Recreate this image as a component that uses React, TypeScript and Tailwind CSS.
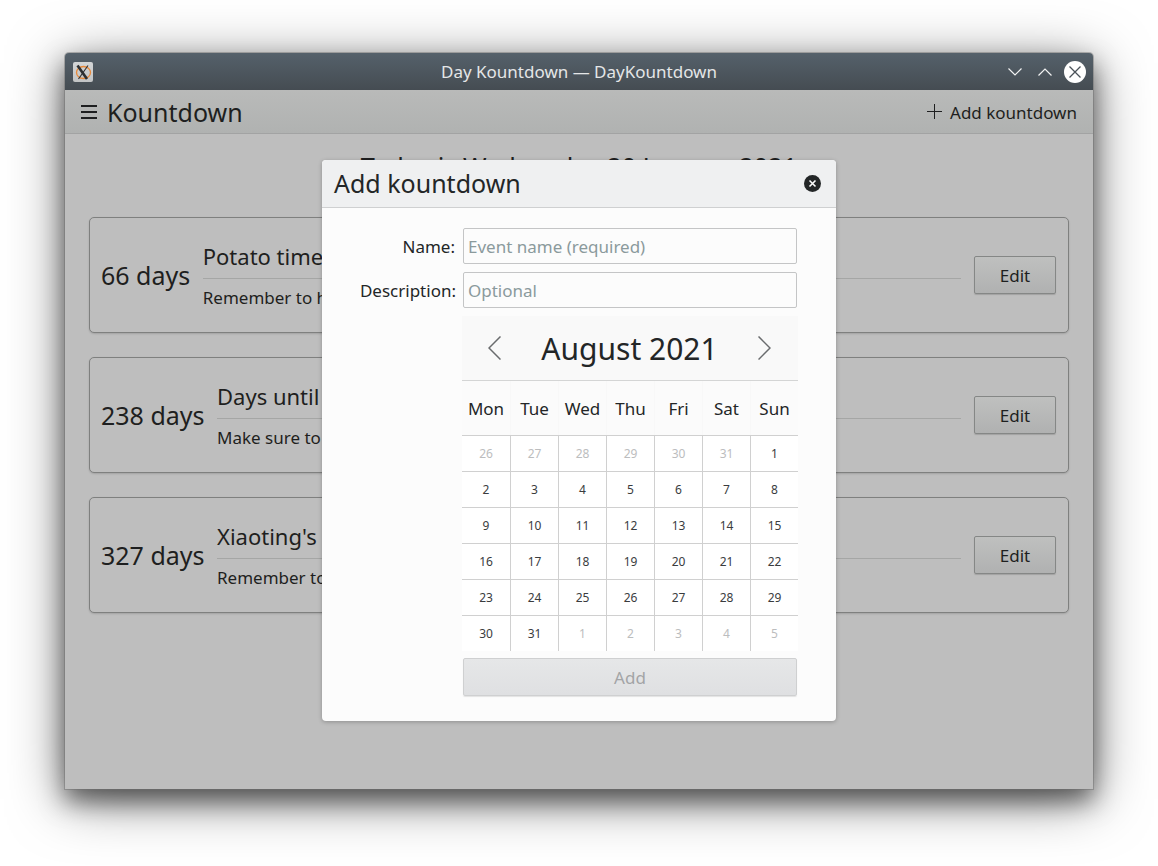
import React from "react";

const font = { fontFamily: '"Noto Sans", sans-serif' };

function Card({ days, title, desc }: { days: string; title: string; desc: string }) {
  return (
    <div className="flex h-[116px] items-center rounded-[5px] border border-[#7f807f] bg-[#bebebe] pl-[11px] pr-[12px] shadow-[0_1px_2px_rgba(0,0,0,0.15)]">
      <div className="mr-[12.5px] whitespace-nowrap text-[25px] leading-none text-[#1e1f20]">{days}</div>
      <div className="mb-[2px] flex min-w-0 flex-1 flex-col">
        <div className="h-[37px] whitespace-nowrap text-[22px] leading-[37px] text-[#1e1f20]">{title}</div>
        <div className="mt-[3px] h-px bg-[#a5a6a5]" />
        <div className="mt-[6px] whitespace-nowrap text-[17px] leading-[26px] text-[#1e1f20]">{desc}</div>
      </div>
      <button className="ml-[13.5px] h-[38px] w-[82px] rounded-[2px] border border-[#858786] bg-gradient-to-b from-[#bfc0bf] to-[#b0b1b1] pt-[2px] text-[17px] text-[#1e1f20] shadow-[0_1px_1px_rgba(0,0,0,0.15)]">
        Edit
      </button>
    </div>
  );
}

const weeks: [string, boolean][][] = [
  [["26", true], ["27", true], ["28", true], ["29", true], ["30", true], ["31", true], ["1", false]],
  [["2", false], ["3", false], ["4", false], ["5", false], ["6", false], ["7", false], ["8", false]],
  [["9", false], ["10", false], ["11", false], ["12", false], ["13", false], ["14", false], ["15", false]],
  [["16", false], ["17", false], ["18", false], ["19", false], ["20", false], ["21", false], ["22", false]],
  [["23", false], ["24", false], ["25", false], ["26", false], ["27", false], ["28", false], ["29", false]],
  [["30", false], ["31", false], ["1", true], ["2", true], ["3", true], ["4", true], ["5", true]],
];

export default function App() {
  return (
    <div style={font} className="h-[866px] w-[1158px] overflow-hidden bg-white pl-[65px] pt-[53px] opacity-[0.999]">
      <div className="relative flex h-[736px] w-[1028px] flex-col rounded-t-[4px] bg-[#bebebe] shadow-[0_0_0_1px_rgba(110,110,110,0.45),0_12px_24px_rgba(0,0,0,0.5),0_10px_55px_rgba(0,0,0,0.5)]">
        {/* Title bar */}
        <div className="relative flex h-[37px] items-center rounded-t-[4px] bg-gradient-to-b from-[#55616b] to-[#454c52] pl-[8px] pr-[7px]">
          <div className="flex h-[20px] w-[20px] items-center justify-center rounded-[2px] bg-gradient-to-b from-[#d3d5d6] to-[#c2c4c5]">
            <svg width="20" height="20" viewBox="0 0 20 20" fill="none">
              <ellipse cx="10.5" cy="10.5" rx="7" ry="6" stroke="#e8893a" strokeWidth="1.3" />
              <path d="M4.5 3.5 L14 17" stroke="#2d2f31" strokeWidth="2.6" />
              <path d="M15 3.5 L5.5 17" stroke="#2d2f31" strokeWidth="1.1" />
            </svg>
          </div>
          <div className="flex-1 pl-[57px] text-center text-[17px] text-[#e4e6e7]">Day Kountdown — DayKountdown</div>
          <div className="flex items-center">
            <svg width="14" height="8" viewBox="0 0 14 8" fill="none" className="mr-[16px]">
              <path d="M0.5 0.5 L7 7 L13.5 0.5" stroke="#f2f3f3" strokeWidth="1.2" />
            </svg>
            <svg width="14" height="8" viewBox="0 0 14 8" fill="none" className="mr-[12px]">
              <path d="M0.5 7.5 L7 1 L13.5 7.5" stroke="#f2f3f3" strokeWidth="1.2" />
            </svg>
            <svg width="22" height="22" viewBox="0 0 22 22" fill="none">
              <circle cx="11" cy="11" r="11" fill="#ffffff" />
              <path d="M5.5 5.5 L16.5 16.5 M16.5 5.5 L5.5 16.5" stroke="#4a5259" strokeWidth="1.3" />
            </svg>
          </div>
        </div>
        {/* Toolbar */}
        <div className="flex h-[44px] items-center border-b border-[#a2a3a3] bg-gradient-to-b from-[#b9bab9] to-[#b0b2b1] pl-[16px] pr-[16px]">
          <svg width="16" height="14" viewBox="0 0 16 14" fill="none">
            <path d="M0 1 H16 M0 7 H16 M0 13 H16" stroke="#1e1f20" strokeWidth="2" />
          </svg>
          <div className="ml-[10px] mt-[2px] flex-1 text-[25px] leading-none text-[#1e1f20]">Kountdown</div>
          <svg width="15" height="15" viewBox="0 0 15 15" fill="none" className="mr-[8px]">
            <path d="M7.5 0 V15 M0 7.5 H15" stroke="#1e1f20" strokeWidth="1" />
          </svg>
          <div className="mt-[2px] text-[17px] text-[#1e1f20]">Add kountdown</div>
        </div>
        {/* Content */}
        <div className="flex flex-1 flex-col px-[24px]">
          <div className="mt-[13px] h-[70px] whitespace-nowrap text-center text-[25.33px] leading-[38px] text-[#1e1f20]">
            Today is Wednesday 20 January 2021
          </div>
          <div className="flex flex-col gap-[24px]">
            <Card days="66 days" title="Potato time" desc="Remember to harvest" />
            <Card days="238 days" title="Days until summer" desc="Make sure to plan" />
            <Card days="327 days" title="Xiaoting's birthday" desc="Remember to call" />
          </div>
        </div>

        {/* Dialog */}
        <div className="absolute left-[257px] top-[107px] flex h-[561px] w-[514px] flex-col rounded-[4px] bg-[#fcfcfc] shadow-[0_1px_4px_rgba(0,0,0,0.25)]">
          <div className="flex h-[48px] items-center justify-between rounded-t-[4px] border-b border-[#cfd0d1] bg-[#eff0f1] pl-[12px] pr-[15px]">
            <div className="text-[25px] leading-none text-[#232627]">Add kountdown</div>
            <svg width="17" height="17" viewBox="0 0 17 17" fill="none">
              <circle cx="8.5" cy="8.5" r="8.5" fill="#232627" />
              <path d="M5.5 5.5 L11.5 11.5 M11.5 5.5 L5.5 11.5" stroke="#fcfcfc" strokeWidth="1.6" />
            </svg>
          </div>
          <div className="flex flex-col pl-[141px] pt-[20px]">
            <div className="relative flex h-[36px] w-[334px] items-center rounded-[2px] border border-[#c4c5c6] bg-[#fcfcfc] pl-[4px] pt-[2px] text-[17px] text-[#8b9a9c]">
              Event name (required)
              <div className="absolute right-[341px] whitespace-nowrap text-[17px] text-[#232627]">Name:</div>
            </div>
            <div className="relative mt-[8px] flex h-[36px] w-[334px] items-center rounded-[2px] border border-[#c4c5c6] bg-[#fcfcfc] pl-[4px] pt-[2px] text-[17px] text-[#8b9a9c]">
              Optional
              <div className="absolute right-[340px] whitespace-nowrap text-[17px] text-[#232627]">Description:</div>
            </div>
            {/* Calendar */}
            <div className="ml-[-1px] mt-[8px] w-[336px]">
              <div className="flex h-[65px] items-center justify-between border-b border-[#d4d5d5] bg-[#f9f9f9] pl-[26px] pr-[27px]">
                <svg width="13" height="24" viewBox="0 0 13 24" fill="none">
                  <path d="M12.5 0.5 L1 12 L12.5 23.5" stroke="#6a6c6e" strokeWidth="1.5" />
                </svg>
                <div className="mt-[2px] text-[30px] leading-none text-[#232627]">August 2021</div>
                <svg width="13" height="24" viewBox="0 0 13 24" fill="none">
                  <path d="M0.5 0.5 L12 12 L0.5 23.5" stroke="#6a6c6e" strokeWidth="1.5" />
                </svg>
              </div>
              <div className="grid h-[54px] grid-cols-7 bg-[#fbfbfb]">
                {["Mon", "Tue", "Wed", "Thu", "Fri", "Sat", "Sun"].map((d, i) => (
                  <div
                    key={d}
                    className={
                      i === 0
                        ? "flex items-center justify-center text-[17px] leading-none text-[#232627]"
                        : "flex items-center justify-center border-l border-[#f8f8f8] text-[17px] leading-none text-[#232627]"
                    }
                  >
                    {d}
                  </div>
                ))}
              </div>
              <div className="grid grid-cols-7 bg-white">
                {weeks.flat().map(([d, muted], i) => (
                  <div
                    key={i}
                    className={
                      "flex h-[36px] items-center justify-center border-t border-[#d0d0d0] text-[12px] " +
                      (i % 7 === 0 ? "" : "border-l ") +
                      (muted ? "text-[#bcbdbe]" : "text-[#3a3c3e]")
                    }
                  >
                    {d}
                  </div>
                ))}
              </div>
            </div>
            <button className="mt-[7px] h-[38px] w-[334px] rounded-[2px] border border-[#cfd0d1] bg-gradient-to-b from-[#e6e7e8] to-[#dfe0e2] pt-[2px] text-[17px] text-[#a3a4a6] shadow-[0_1px_1px_rgba(0,0,0,0.1)]">
              Add
            </button>
          </div>
        </div>
      </div>
    </div>
  );
}
